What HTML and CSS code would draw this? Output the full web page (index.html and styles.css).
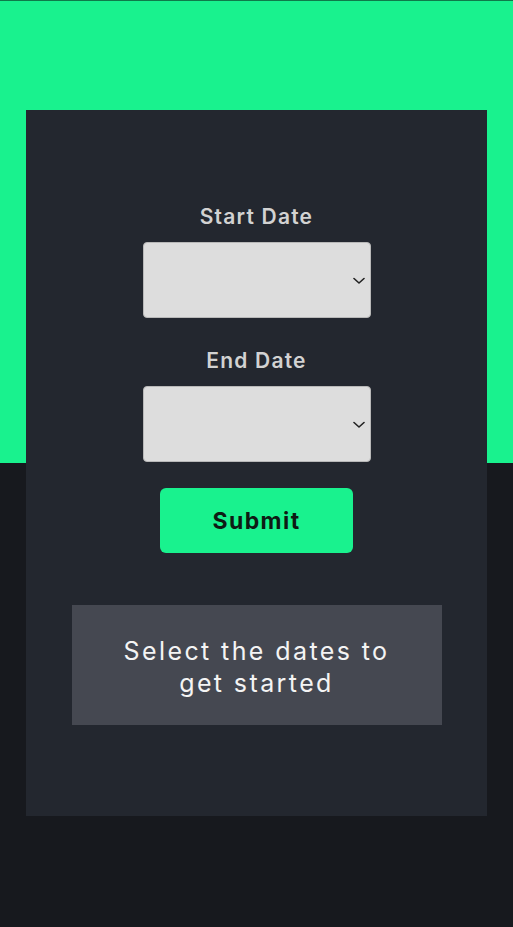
FILE: index.html
```html
<!DOCTYPE html>
<html>
<head>
<meta charset="utf-8">
<link rel="stylesheet" href="styles.css">
</head>
<body>
<div class="page">
  <div class="card">
    <div class="field">
      <div class="label">Start Date</div>
      <div class="select"><svg class="chev" width="12" height="8" viewBox="0 0 12 8"><path d="M1 1.5 L6 6 L11 1.5" fill="none" stroke="#222" stroke-width="1.6" stroke-linecap="round" stroke-linejoin="round"/></svg></div>
    </div>
    <div class="field second">
      <div class="label">End Date</div>
      <div class="select"><svg class="chev" width="12" height="8" viewBox="0 0 12 8"><path d="M1 1.5 L6 6 L11 1.5" fill="none" stroke="#222" stroke-width="1.6" stroke-linecap="round" stroke-linejoin="round"/></svg></div>
    </div>
    <button class="submit">Submit</button>
    <div class="message">Select the dates to<br>get started</div>
  </div>
</div>
</body>
</html>
```
FILE: styles.css
```css
html, body {
  margin: 0;
  padding: 0;
}
body {
  background: #17191e;
  font-family: "Inter", "Open Sans", sans-serif;
}
.page {
  min-height: 927px;
  background: linear-gradient(to bottom, #0f7a4a 0, #0f7a4a 1px, #19f28e 1px, #19f28e 463px, #17191e 463px);
  padding-top: 110px;
  padding-left: 26px;
  box-sizing: border-box;
}
.card {
  width: 461px;
  height: 706px;
  background: #23272f;
  box-sizing: border-box;
  padding-top: 95px;
  display: flex;
  flex-direction: column;
  align-items: center;
}
.field {
  display: flex;
  flex-direction: column;
  align-items: center;
}
.field.second {
  margin-top: 31px;
}
.label {
  font-size: 21px;
  line-height: 24px;
  font-weight: 600;
  color: #d2d2d2;
  letter-spacing: 1.2px;
}
.select {
  margin-top: 13px;
  width: 228px;
  height: 76px;
  box-sizing: border-box;
  background: #dddddd;
  border: 1px solid #b8b8b8;
  border-radius: 4px;
  display: flex;
  align-items: center;
  justify-content: flex-end;
  padding-right: 5px;
  padding-top: 1px;
}
.chev {
  display: block;
}
.submit {
  margin-top: 26px;
  width: 193px;
  height: 65px;
  border: none;
  border-radius: 6px;
  background: #19f28e;
  color: #0e1b14;
  font-family: "Inter", "Open Sans", sans-serif;
  font-size: 23px;
  font-weight: 700;
  letter-spacing: 1.4px;
  padding: 0;
}
.message {
  margin-top: 52px;
  width: 370px;
  height: 120px;
  box-sizing: border-box;
  padding-top: 4px;
  background: #454851;
  color: #f4f4f4;
  font-size: 25px;
  line-height: 32px;
  letter-spacing: 2.4px;
  text-align: center;
  display: flex;
  align-items: center;
  justify-content: center;
}
```
